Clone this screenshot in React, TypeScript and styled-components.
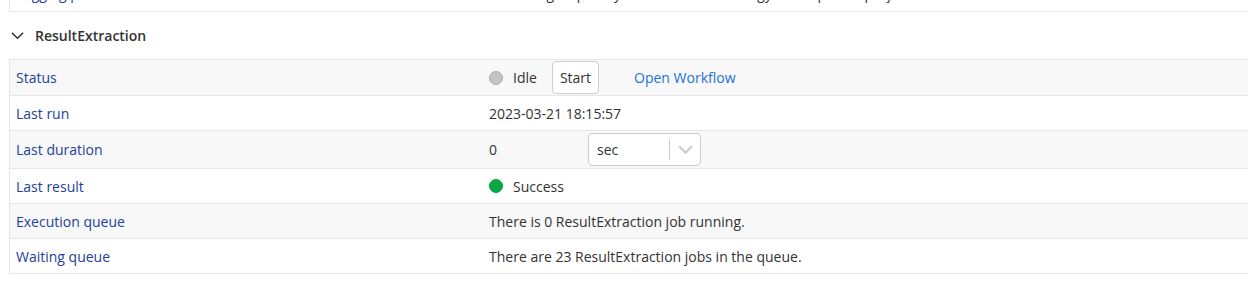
import styled, { createGlobalStyle } from "styled-components";

const Global = createGlobalStyle`
  html, body {
    margin: 0;
    padding: 0;
    background: #fff;
    overflow: hidden;
  }
  body {
    font-family: "Open Sans", "Noto Sans", sans-serif;
    font-size: 14px;
    color: #333;
  }
`;

const Page = styled.div`
  padding-left: 9px;
  width: 1260px;
`;

const Table = styled.div<{ $clipped?: boolean }>`
  border: 1px solid #e6e6e6;
  border-bottom: none;
  margin-top: ${(p) => (p.$clipped ? "-26px" : "0")};
`;

const Row = styled.div<{ $striped?: boolean; $h?: number }>`
  display: grid;
  grid-template-columns: 472px 1fr;
  align-items: center;
  height: ${(p) => p.$h ?? 34}px;
  background: ${(p) => (p.$striped ? "#f8f8f8" : "#fff")};
  border-bottom: 1px solid #e6e6e6;
  overflow: hidden;
`;

const Label = styled.div`
  padding-left: 6px;
  color: #24409a;
  white-space: nowrap;
`;

const Value = styled.div`
  padding-left: 7px;
  display: flex;
  align-items: center;
  white-space: nowrap;
`;

const Section = styled.div`
  display: flex;
  align-items: center;
  gap: 10px;
  height: 47px;
  padding-left: 1px;
  font-size: 14px;
  font-weight: 600;
  color: #333;
`;

const Dot = styled.span<{ $color: string; $ring: string }>`
  width: 12px;
  height: 12px;
  border-radius: 50%;
  background: ${(p) => p.$color};
  border: 1px solid ${(p) => p.$ring};
  margin-right: 10px;
`;

const Button = styled.button`
  font: inherit;
  color: #333;
  background: #fff;
  border: 1px solid #cfcfcf;
  border-radius: 4px;
  height: 33px;
  padding: 0 7px;
  margin-left: 15px;
`;

const Link = styled.a`
  color: #2272d8;
  text-decoration: none;
  margin-left: 35px;
`;

const Amount = styled.span`
  width: 99px;
`;

const Select = styled.div`
  display: flex;
  align-items: center;
  width: 111px;
  height: 31px;
  border: 1px solid #cccccc;
  border-radius: 4px;
  background: #fff;
`;

const SelectText = styled.span`
  flex: 1;
  padding-left: 8px;
`;

const Divider = styled.span`
  width: 1px;
  height: 21px;
  background: #cccccc;
`;

const Arrow = styled.span`
  display: flex;
  width: 30px;
  justify-content: center;
`;

const Chevron = ({ color, size, width }: { color: string; size: number; width: number }) => (
  <svg width={size} height={size} viewBox="0 0 16 16">
    <path d="M2 5l6 6 6-6" fill="none" stroke={color} strokeWidth={width} />
  </svg>
);

export default function App() {
  return (
    <>
      <Global />
      <Page>
        <Table $clipped>
          <Row $h={36}>
            <Label>Logging path</Label>
            <Value>Files are grouped by the extraction strategy of the parent project.</Value>
          </Row>
        </Table>
        <Section>
          <Chevron color="#333" size={15} width={1.6} />
          ResultExtraction
        </Section>
        <Table>
          <Row $striped $h={35}>
            <Label>Status</Label>
            <Value>
              <Dot $color="#c4c4c4" $ring="#acacac" />
              Idle
              <Button>Start</Button>
              <Link href="#">Open Workflow</Link>
            </Value>
          </Row>
          <Row>
            <Label>Last run</Label>
            <Value>2023-03-21 18:15:57</Value>
          </Row>
          <Row $striped $h={37}>
            <Label>Last duration</Label>
            <Value>
              <Amount>0</Amount>
              <Select>
                <SelectText>sec</SelectText>
                <Divider />
                <Arrow>
                  <Chevron color="#cccccc" size={17} width={2} />
                </Arrow>
              </Select>
            </Value>
          </Row>
          <Row>
            <Label>Last result</Label>
            <Value>
              <Dot $color="#0aa845" $ring="#0a9a40" />
              Success
            </Value>
          </Row>
          <Row $striped>
            <Label>Execution queue</Label>
            <Value>There is 0 ResultExtraction job running.</Value>
          </Row>
          <Row>
            <Label>Waiting queue</Label>
            <Value>There are 23 ResultExtraction jobs in the queue.</Value>
          </Row>
        </Table>
      </Page>
    </>
  );
}
